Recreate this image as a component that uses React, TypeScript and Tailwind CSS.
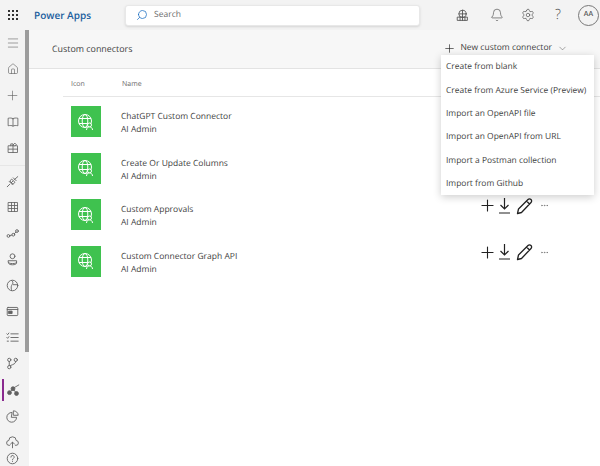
import { Bell, ChevronDown, Ellipsis, Home, Menu, Plus, Search, Settings } from "lucide-react"

const connectors = [
  "ChatGPT Custom Connector",
  "Create Or Update Columns",
  "Custom Approvals",
  "Custom Connector Graph API",
]

const menuItems = [
  "Create from blank",
  "Create from Azure Service (Preview)",
  "Import an OpenAPI file",
  "Import an OpenAPI from URL",
  "Import a Postman collection",
  "Import from Github",
]

function Glyph({ children, size = 13 }: { children: React.ReactNode; size?: number }) {
  return (
    <svg width={size} height={size} viewBox="0 0 16 16" fill="none" stroke="currentColor" strokeWidth="1.1" strokeLinecap="round" strokeLinejoin="round">
      {children}
    </svg>
  )
}

function ConnectorIcon() {
  return (
    <div className="flex h-[31px] w-[30px] shrink-0 items-center justify-center bg-[#3fc24f]">
      <svg width="18" height="18" viewBox="0 0 18 18" fill="none" stroke="white" strokeWidth="1">
        <circle cx="8" cy="8" r="6.5" />
        <ellipse cx="8" cy="8" rx="2.8" ry="6.5" />
        <path d="M2 5.5h12M2 10.5h12" />
        <circle cx="12.5" cy="12" r="2" fill="#3fc24f" />
        <path d="M9.5 17c0-2 1.3-3 3-3s3 1 3 3" fill="#3fc24f" />
      </svg>
    </div>
  )
}

function WaffleIcon() {
  return (
    <div className="grid w-[10px] grid-cols-3 gap-[2px]">
      {Array.from({ length: 9 }).map((_, i) => (
        <div key={i} className="h-[2px] w-[2px] bg-[#333333]" />
      ))}
    </div>
  )
}

function NavItem({ children, className }: { children: React.ReactNode; className?: string }) {
  return <div className={`flex h-[26.1px] w-full shrink-0 items-center justify-center text-[#616161] ${className ?? ""}`}>{children}</div>
}

export default function App() {
  return (
    <div className="flex h-[466px] w-[600px] flex-col overflow-hidden bg-white font-['Open_Sans',sans-serif] text-[#424242] [text-rendering:geometricPrecision]">
      <header className="flex h-[30px] shrink-0 items-center bg-[#f3f3f3]">
        <div className="ml-[8px] w-[26px]">
          <WaffleIcon />
        </div>
        <span className="w-[91px] text-[10px] font-semibold whitespace-nowrap text-[#1b5e9e]">Power Apps</span>
        <div className="flex h-[21px] w-[295px] items-center gap-[6px] rounded-[3px] border border-[#e8e8e8] bg-white pl-[10px] shadow-sm">
          <Search className="h-[12px] w-[12px] -scale-x-100 text-[#1b6ec2]" strokeWidth={1.5} />
          <span className="text-[8.5px] text-[#6b6b6b]">Search</span>
        </div>
        <div className="flex flex-1 items-center text-[#555555]">
          <div className="ml-[36px]">
            <Glyph size={13}>
              <circle cx="8" cy="6" r="4.5" />
              <path d="M3.5 6h9M8 1.500v9M2 10h12v4H2zM5 10v4M8 10v4M11 10v4" />
            </Glyph>
          </div>
          <Bell className="ml-[21px] h-[14px] w-[14px]" strokeWidth={1.2} />
          <Settings className="ml-[17px] h-[14px] w-[14px]" strokeWidth={1.2} />
          <span className="ml-[20px] w-[8px] text-[14px] leading-none font-light">?</span>
          <div className="ml-[15px] flex h-[21px] w-[21px] items-center justify-center rounded-full border border-[#777777] text-[7px] font-semibold">AA</div>
        </div>
      </header>
      <div className="flex min-h-0 flex-1">
        <nav className="flex w-[29px] shrink-0 bg-[#f3f3f3]">
          <div className="flex w-[25px] flex-col items-center">
            <NavItem><Menu className="h-[14px] w-[14px]" strokeWidth={1} /></NavItem>
            <NavItem className="h-[26.3px]"><Home className="h-[12px] w-[12px]" strokeWidth={1.25} /></NavItem>
            <NavItem className="h-[26.3px]"><Plus className="h-[15px] w-[15px]" strokeWidth={1} /></NavItem>
            <NavItem className="h-[26.3px]">
              <Glyph size={12}><path d="M8 3.500C6.500 2.500 4 2.500 1.500 3v10C4 12.500 6.500 12.500 8 13.500c1.500-1 4-1 6.500-.5V3C12 2.500 9.500 2.500 8 3.500zM8 3.500v10" /></Glyph>
            </NavItem>
            <NavItem className="h-[26.3px]">
              <Glyph size={12}><path d="M2 5h12v9H2zM2 9.500h12M8 5v9M5 5V2.500h3V5M8 4l2.500-2.500 2 2L10.500 5" /></Glyph>
            </NavItem>
            <div className="mt-[4px] mb-[2px] h-[1px] w-full shrink-0 bg-[#e6e6e6]" />
            <NavItem>
              <Glyph size={13}><path d="M1.500 14.500l3-3M4 8l4 4M5 7l2-2 4 4-2 2zM9 3.500l3.500 3.500M10.500 5.500l4-3.500M6.500 9.500l2-2" /></Glyph>
            </NavItem>
            <NavItem>
              <Glyph size={12}><path d="M2 2h12v12H2zM2 6h12M2 10h12M6 2v12M10 2v12" /></Glyph>
            </NavItem>
            <NavItem>
              <Glyph size={13}>
                <circle cx="3" cy="11" r="1.700" />
                <circle cx="9" cy="9.500" r="1.700" />
                <circle cx="13.500" cy="5" r="1.700" />
                <path d="M4.700 10.500l2.600-.600M10.200 8.300l2.100-2.100" />
              </Glyph>
            </NavItem>
            <NavItem>
              <Glyph size={13}>
                <circle cx="8" cy="4" r="3" />
                <path d="M3 9.500h10v3c0 1-2 2-5 2s-5-1-5-2zM3 11.500c0 1 2 1.500 5 1.500s5-.5 5-1.500" />
              </Glyph>
            </NavItem>
            <NavItem>
              <Glyph size={13}>
                <circle cx="8" cy="8" r="6.500" />
                <path d="M7 1.700c1.500 1.500 2 3 1 4.500S5.500 9 7 14.300M9 7h5" />
              </Glyph>
            </NavItem>
            <NavItem>
              <Glyph size={13}>
                <rect x="1.500" y="3" width="13" height="10" rx="1" />
                <path d="M1.500 5.500h13" />
                <path d="M3.500 7.500h4v3h-4z" fill="currentColor" />
              </Glyph>
            </NavItem>
            <NavItem>
              <Glyph size={13}><path d="M6 3.500h9M6 8h9M6 12.500h9M1 3.500l1 1 1.500-2M1 8l1 1 1.500-2M1.500 12.500h1.500" /></Glyph>
            </NavItem>
            <NavItem>
              <Glyph size={13}>
                <circle cx="4" cy="3.500" r="2" />
                <circle cx="12" cy="3.500" r="2" />
                <circle cx="4" cy="12.500" r="2" />
                <path d="M4 5.500v5M12 5.500c0 3-3 3.500-6.500 5" />
              </Glyph>
            </NavItem>
            <NavItem className="relative text-[#8a2a8f]">
              <div className="absolute left-[2px] top-[2px] h-[22px] w-[2px] bg-[#8a2a8f]" />
              <svg width="14" height="14" viewBox="0 0 16 16" fill="currentColor" stroke="currentColor" strokeWidth="1">
                <circle cx="4" cy="11" r="2.200" />
                <circle cx="12" cy="12" r="2.200" />
                <circle cx="8" cy="6.500" r="2.200" />
                <path d="M4 11l4-4.500 4 5.500M9 5.500l6-3.500" fill="none" />
              </svg>
            </NavItem>
            <NavItem>
              <Glyph size={13}>
                <path d="M7 3a6 6 0 1 0 6 6H7z" />
                <path d="M9.500 1a5.500 5.500 0 0 1 5.500 5.500H9.500z" />
              </Glyph>
            </NavItem>
            <NavItem>
              <Glyph size={13}>
                <path d="M4.500 11.500H4a3 3 0 0 1-.500-6 4.500 4.500 0 0 1 9 0 3 3 0 0 1-.500 6h-.500M8 14.500V8M5.500 10L8 7.500l2.500 2.500" />
              </Glyph>
            </NavItem>
            <div className="flex h-[6px] w-full shrink-0 items-center justify-center text-[#616161]">
              <Glyph size={13}>
                <circle cx="8" cy="8" r="6.500" />
                <path d="M6 6.300a2 2 0 1 1 3 1.700c-.700.400-1 .900-1 1.700M8 11.700v.100" />
              </Glyph>
            </div>
          </div>
          <div className="w-[4px]">
            <div className="h-[322px] w-full bg-[#9c9c9c]" />
          </div>
        </nav>
        <main className="relative min-w-0 flex-1">
          <div className="flex h-[39px] items-center justify-between border-b border-[#e3e3e3] bg-[#f7f7f7] pl-[23px]">
            <span className="text-[8.9px] text-[#424242]">Custom connectors</span>
            <div className="mr-[32px] mt-[-1px] flex items-center gap-[5px]">
              <Plus className="-mr-[1px] h-[13px] w-[13px] text-[#222222]" strokeWidth={1.2} />
              <span className="text-[8.5px] text-[#424242]">New custom connector</span>
              <ChevronDown className="h-[11px] w-[11px]" strokeWidth={1} />
            </div>
          </div>
          <div className="pl-[34px] pt-[7px]">
            <div className="flex h-[21px] items-center border-b border-[#e6e6e6] pb-[2px] text-[7px] text-[#6b6b6b]">
              <span className="ml-[8px] w-[51px]">Icon</span>
              <span>Name</span>
            </div>
            <div className="flex flex-col pl-[8px] pt-[9px]">
              {connectors.map((name) => (
                <div key={name} className="flex h-[46.5px] items-start">
                  <ConnectorIcon />
                  <div className="ml-[20px] w-[357px] pt-[4px] text-[8.5px] leading-[13px] text-[#424242]">
                    <div>{name}</div>
                    <div>AI Admin</div>
                  </div>
                  <div className="-mt-[3px] flex items-center text-[#222222]">
                    <Plus className="h-[19px] w-[19px]" strokeWidth={1.4} />
                    <svg className="ml-[1px]" width="13" height="18" viewBox="0 0 13 18" fill="none" stroke="currentColor" strokeWidth="1.2">
                      <path d="M6.500 1v11M2.500 8l4 4 4-4M1 16h11" />
                    </svg>
                    <svg className="ml-[5px]" width="17" height="18" viewBox="0 0 17 18" fill="none" stroke="currentColor" strokeWidth="1.3" strokeLinejoin="round">
                      <path d="M1.500 16.500l1-4.500L12 2.500a2 2 0 0 1 3 3L5.500 15.500zM10.500 4l3 3" />
                    </svg>
                    <Ellipsis className="ml-[7px] h-[9px] w-[9px] text-[#666666]" strokeWidth={1.5} />
                  </div>
                </div>
              ))}
            </div>
          </div>
          <div className="absolute left-[412px] top-[25px] flex h-[140px] w-[153px] flex-col bg-white shadow-[0_2px_8px_rgba(0,0,0,0.2)]">
            {menuItems.map((item) => (
              <div key={item} className="flex h-[23.3px] shrink-0 items-center px-[5px] pt-[2px] text-[8.45px] whitespace-nowrap text-[#424242]">
                {item}
              </div>
            ))}
          </div>
        </main>
      </div>
    </div>
  )
}
